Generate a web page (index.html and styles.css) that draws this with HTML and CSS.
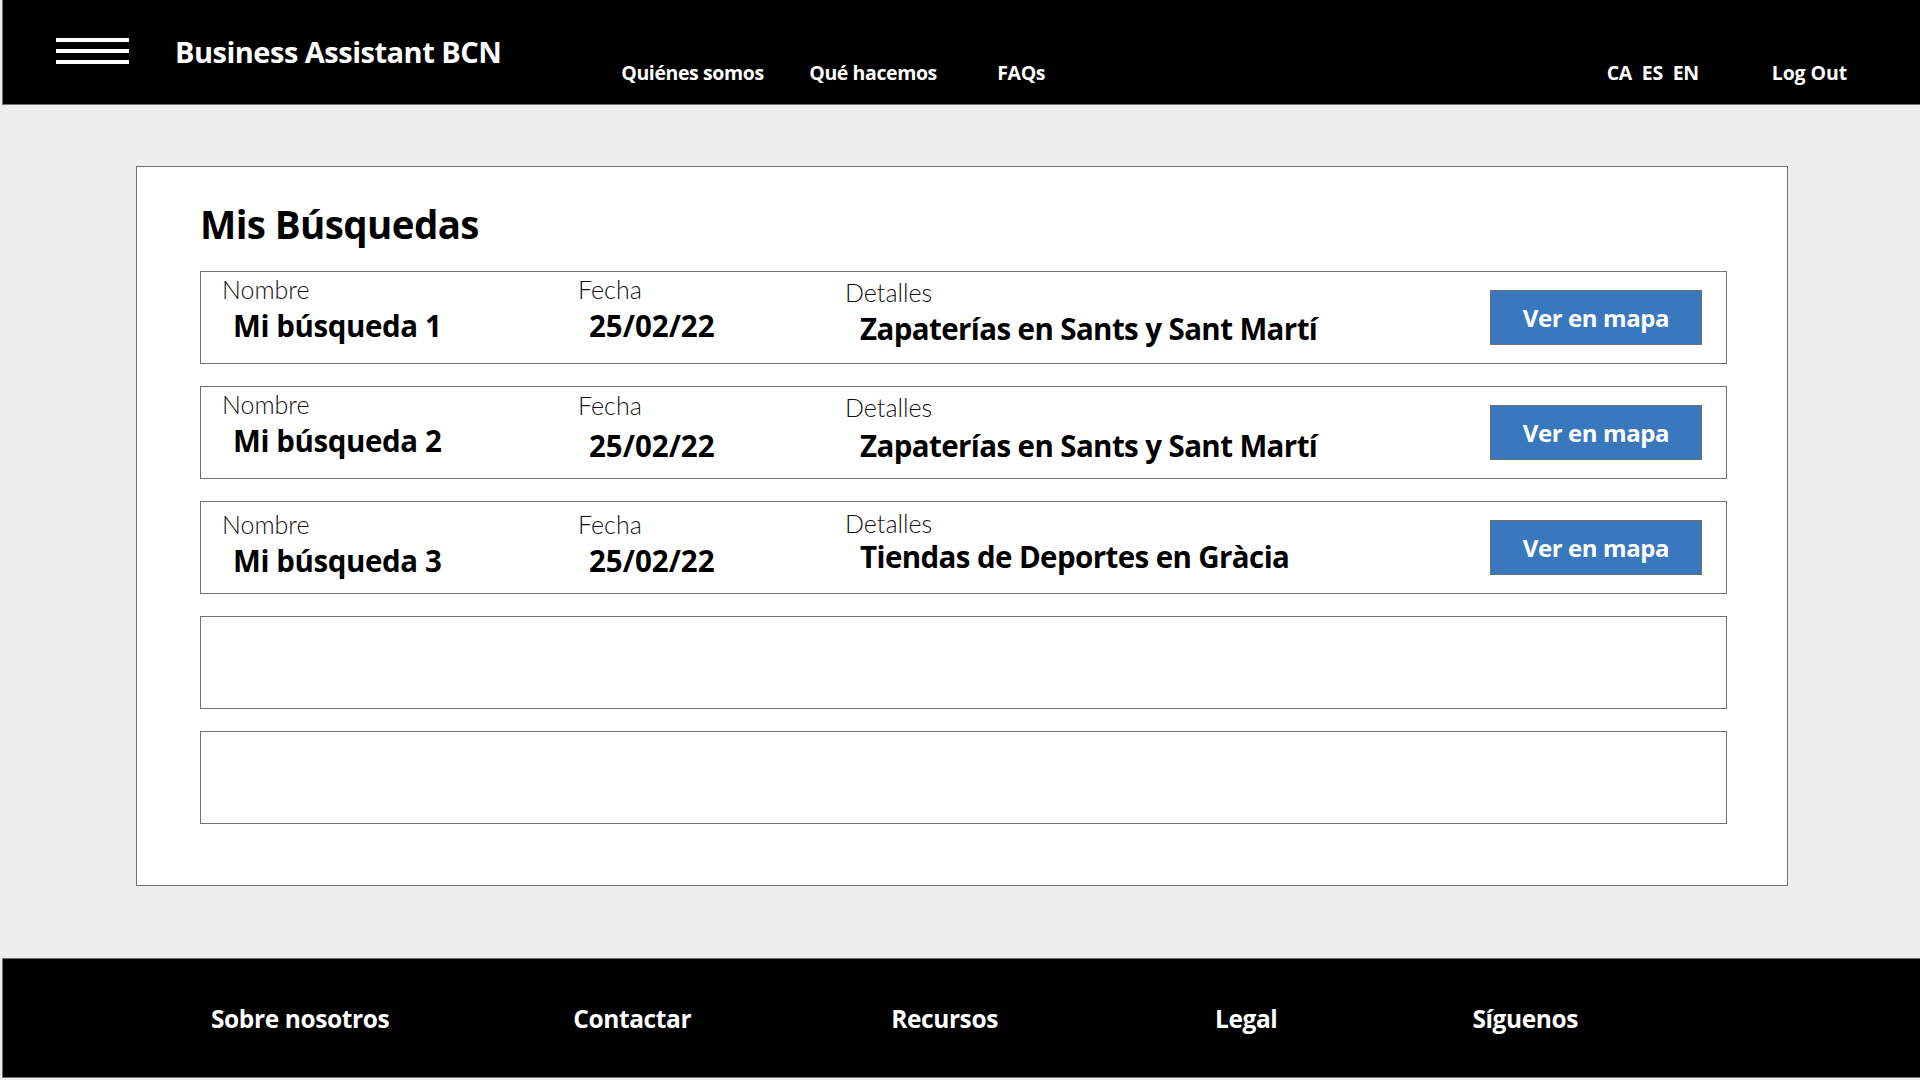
FILE: index.html
```html
<!DOCTYPE html>
<html lang="es">
<head>
<meta charset="utf-8">
<title>Business Assistant BCN - Mis Búsquedas</title>
<link rel="stylesheet" href="styles.css">
</head>
<body>
<header class="topbar">
  <div class="burger"><span></span><span></span><span></span></div>
  <div class="brand">Business Assistant BCN</div>
  <nav class="mainnav">
    <a class="navlink">Quiénes somos</a>
    <a class="navlink">Qué hacemos</a>
    <a class="navlink">FAQs</a>
  </nav>
  <div class="langs"><span>CA</span><span>ES</span><span>EN</span></div>
  <a class="logout">Log Out</a>
</header>

<main class="card">
  <h1 class="title">Mis Búsquedas</h1>
  <div class="rows">
    <div class="row">
      <div class="col c1"><div class="lbl">Nombre</div><div class="val">Mi búsqueda 1</div></div>
      <div class="col c2"><div class="lbl">Fecha</div><div class="val">25/02/22</div></div>
      <div class="col c3 pt7"><div class="lbl">Detalles</div><div class="val">Zapaterías en Sants y Sant Martí</div></div>
      <button class="btn">Ver en mapa</button>
    </div>
    <div class="row">
      <div class="col c1"><div class="lbl">Nombre</div><div class="val">Mi búsqueda 2</div></div>
      <div class="col c2 pt5"><div class="lbl">Fecha</div><div class="val vdown">25/02/22</div></div>
      <div class="col c3 pt7"><div class="lbl">Detalles</div><div class="val vdown2">Zapaterías en Sants y Sant Martí</div></div>
      <button class="btn">Ver en mapa</button>
    </div>
    <div class="row">
      <div class="col c1 pt9"><div class="lbl">Nombre</div><div class="val">Mi búsqueda 3</div></div>
      <div class="col c2 pt9"><div class="lbl">Fecha</div><div class="val">25/02/22</div></div>
      <div class="col c3 pt8"><div class="lbl">Detalles</div><div class="val vup">Tiendas de Deportes en Gràcia</div></div>
      <button class="btn">Ver en mapa</button>
    </div>
    <div class="row empty"></div>
    <div class="row empty"></div>
  </div>
</main>

<footer class="footer">
  <a class="flink">Sobre nosotros</a>
  <a class="flink">Contactar</a>
  <a class="flink">Recursos</a>
  <a class="flink">Legal</a>
  <a class="flink">Síguenos</a>
</footer>
</body>
</html>
```

FILE: styles.css
```css
* { box-sizing: border-box; }
html, body { margin: 0; padding: 0; }
body {
  width: 1920px;
  height: 1080px;
  background: #eeeeee;
  font-family: "Open Sans", "Noto Sans", sans-serif;
  color: #000;
  overflow: hidden;
}
a { color: inherit; text-decoration: none; }

.topbar {
  display: flex;
  align-items: flex-start;
  height: 105px;
  margin-left: 2px;
  background: #000;
  border-left: 1px solid #707070;
  border-bottom: 1px solid #707070;
  color: #fff;
  padding-left: 53px;
}
.burger {
  width: 73px;
  margin-top: 38px;
  display: flex;
  flex-direction: column;
  gap: 7px;
}
.burger span {
  display: block;
  height: 4px;
  background: #fff;
}
.brand {
  margin-left: 46px;
  margin-top: 32px;
  font-size: 29px;
  line-height: 40px;
  font-weight: 700;
  letter-spacing: -0.5px;
}
.mainnav {
  display: flex;
  margin-left: 120px;
  margin-top: 61px;
}
.navlink, .langs, .logout {
  font-size: 19.5px;
  line-height: 24px;
  font-weight: 700;
  letter-spacing: -0.4px;
}
.navlink { width: 188px; }
.langs {
  margin-left: auto;
  margin-top: 61px;
  display: flex;
  gap: 10px;
}
.logout {
  margin-top: 61px;
  margin-left: 73px;
  margin-right: 73px;
  letter-spacing: -0.1px;
}

.card {
  display: block;
  margin: 61px 0 0 136px;
  width: 1652px;
  height: 720px;
  background: #fff;
  border: 1px solid #707070;
  padding: 32px 60px 0 63px;
}
.title {
  margin: 0 0 22px 0;
  font-size: 38.5px;
  line-height: 50px;
  font-weight: 700;
  letter-spacing: -0.6px;
}
.rows {
  display: flex;
  flex-direction: column;
  gap: 22px;
}
.row {
  height: 93px;
  border: 1px solid #707070;
  display: flex;
  align-items: flex-start;
  padding-left: 21px;
}
.col { padding-top: 4px; }
.pt5 { padding-top: 5px; }
.pt7 { padding-top: 7px; }
.pt8 { padding-top: 8px; }
.pt9 { padding-top: 9px; }
.c1 { width: 356px; }
.c2 { width: 267px; }
.c3 { flex: 1; }
.lbl {
  font-family: "Lato", "Open Sans", sans-serif;
  font-size: 25px;
  line-height: 26px;
  font-weight: 300;
  color: #111;
  margin-bottom: 6px;
}
.val {
  font-size: 29.5px;
  line-height: 36px;
  font-weight: 700;
  letter-spacing: -0.4px;
  padding-left: 11px;
}
.c2 .val { letter-spacing: 0; }
.vdown { margin-top: 10px; }
.vdown2 { margin-top: 8px; }
.vup { margin-top: -3px; }
.c3 .val { padding-left: 15px; letter-spacing: -0.6px; }
.btn {
  align-self: center;
  margin-right: 24px;
  width: 212px;
  height: 55px;
  background: #3a78be;
  border: 1px solid #707070;
  color: #fff;
  font-family: inherit;
  font-size: 24px;
  font-weight: 700;
  letter-spacing: -0.4px;
  padding: 0;
  cursor: pointer;
}

.footer {
  margin-top: 72px;
  margin-left: 2px;
  height: 120px;
  background: #000;
  border-top: 1px solid #707070;
  border-bottom: 1px solid #707070;
  border-left: 1px solid #707070;
  display: flex;
  align-items: center;
  color: #fff;
  padding-left: 208px;
  padding-top: 2px;
}
.flink {
  font-size: 24.5px;
  line-height: 30px;
  font-weight: 700;
  letter-spacing: -0.4px;
}
.flink:nth-child(2) { margin-left: 184px; }
.flink:nth-child(3) { margin-left: 200px; }
.flink:nth-child(4) { margin-left: 217px; }
.flink:nth-child(5) { margin-left: 195px; }
```
